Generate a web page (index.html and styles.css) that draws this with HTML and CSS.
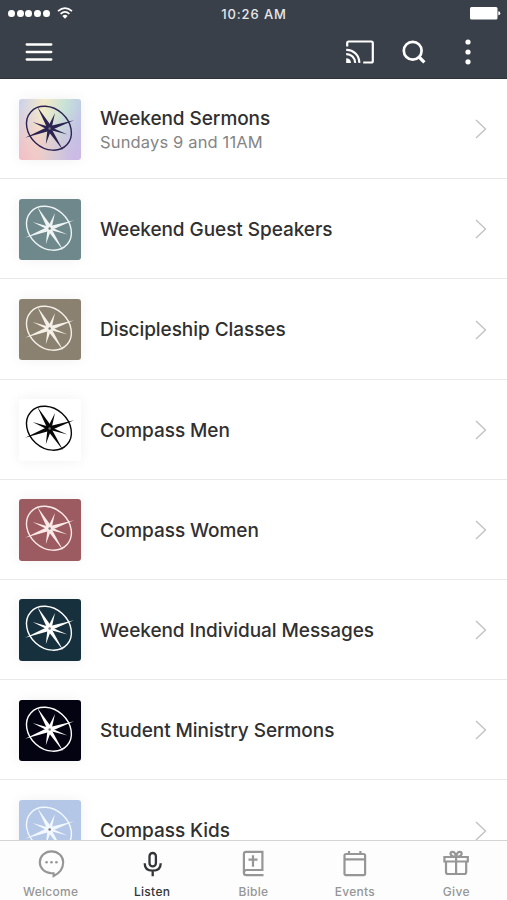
FILE: index.html
```html
<!DOCTYPE html>
<html lang="en">
<head>
<meta charset="utf-8">
<title>Listen</title>
<link rel="stylesheet" href="styles.css">
</head>
<body>
<svg class="defs" aria-hidden="true">
  <symbol id="compass" viewBox="0 0 61 61">
    <ellipse cx="29.7" cy="29" rx="24.2" ry="19.6" transform="rotate(42 29.7 29)" fill="none" stroke="currentColor" stroke-width="1.4"/>
    <path fill="currentColor" d="M18 7.5 31.8 26.6 54.5 21 32.8 30.6 43.9 51 29 32 6 38.5 27.6 28Z"/>
    <path fill="currentColor" d="M35.7 13.8 32.5 28.3 48 35.2 31.8 31 26.6 44.8 28.2 30.2 13.5 22.8 29 27.4Z"/>
    <circle class="hub" cx="30.4" cy="29.2" r="1.2"/>
  </symbol>
  <symbol id="chevron" viewBox="0 0 12 20"><path d="M1 1 10.5 10 1 19" fill="none" stroke="currentColor" stroke-width="1.4"/></symbol>
</svg>
<div class="app">
  <header class="header">
    <div class="status">
      <div class="signal"><i></i><i></i><i></i><i></i><i></i>
        <svg class="wifi" width="16" height="12" viewBox="0 0 16 12"><g fill="none" stroke="currentColor" stroke-width="1.7"><path d="M1 4.2Q8-1.8 15 4.2"/><path d="M3.6 6.9Q8 3 12.4 6.9"/></g><path fill="currentColor" d="M5.4 8.9Q8 6.8 10.6 8.9L8 11.7Z"/></svg>
      </div>
      <time class="clock">10:26 AM</time>
      <svg class="battery" width="31" height="13" viewBox="0 0 31 13" fill="currentColor"><rect width="27.5" height="12.4" rx="1.5"/><path d="M28.3 4.2q2 .2 2 2t-2 2z"/></svg>
    </div>
    <div class="toolbar">
      <svg class="menu" width="28" height="20" viewBox="0 0 28 20"><path d="M1.7 2.5H26.3M1.7 10H26.3M1.7 17.5H26.3" stroke="currentColor" stroke-width="2.3" stroke-linecap="round"/></svg>
      <svg class="cast" width="28" height="24" viewBox="0 0 28 24" fill="none" stroke="currentColor" stroke-width="2.2"><path d="M1.2 6.6V3Q1.2 1.5 2.7 1.5H25.3Q26.8 1.5 26.8 3V21Q26.8 22.5 25.3 22.5H17.2M.2 9.8A12.8 12.8 0 0 1 13.3 22.9M.2 14.1A8.6 8.6 0 0 1 9.1 22.9"/><path fill="currentColor" stroke="none" d="M.2 18.2A4.8 4.8 0 0 1 5 23H.2Z"/></svg>
      <svg class="search" width="24" height="24" viewBox="0 0 24 24" fill="none" stroke="currentColor"><circle cx="10.7" cy="10.7" r="8.9" stroke-width="2.7"/><path d="m17 17 5.4 5.4" stroke-width="3.2"/></svg>
      <svg class="more" width="6" height="26" viewBox="0 0 6 26" fill="currentColor"><circle cx="3" cy="3" r="2.6"/><circle cx="3" cy="13" r="2.6"/><circle cx="3" cy="22.8" r="2.6"/></svg>
    </div>
  </header>
  <main class="list">
    <a class="row"><span class="tile rainbow"><svg><use href="#compass"/></svg></span><span class="label"><b>Weekend Sermons</b><small>Sundays 9 and 11AM</small></span><svg class="chevron"><use href="#chevron"/></svg></a>
    <a class="row"><span class="tile teal"><svg><use href="#compass"/></svg></span><span class="label"><b>Weekend Guest Speakers</b></span><svg class="chevron"><use href="#chevron"/></svg></a>
    <a class="row"><span class="tile taupe"><svg><use href="#compass"/></svg></span><span class="label"><b>Discipleship Classes</b></span><svg class="chevron"><use href="#chevron"/></svg></a>
    <a class="row"><span class="tile white"><svg><use href="#compass"/></svg></span><span class="label"><b>Compass Men</b></span><svg class="chevron"><use href="#chevron"/></svg></a>
    <a class="row"><span class="tile red"><svg><use href="#compass"/></svg></span><span class="label"><b>Compass Women</b></span><svg class="chevron"><use href="#chevron"/></svg></a>
    <a class="row"><span class="tile navy"><svg><use href="#compass"/></svg></span><span class="label"><b>Weekend Individual Messages</b></span><svg class="chevron"><use href="#chevron"/></svg></a>
    <a class="row"><span class="tile black"><svg><use href="#compass"/></svg></span><span class="label"><b>Student Ministry Sermons</b></span><svg class="chevron"><use href="#chevron"/></svg></a>
    <a class="row"><span class="tile blue"><svg><use href="#compass"/></svg></span><span class="label"><b>Compass Kids</b></span><svg class="chevron"><use href="#chevron"/></svg></a>
  </main>
  <nav class="tabs">
    <a class="tab"><svg viewBox="0 0 28 28"><path d="M16.6 23.2H14.5A11.7 10.9 0 1 1 26.2 12.3Q26.2 21.5 16.6 26Z" fill="none" stroke="currentColor" stroke-width="2.1"/><g fill="currentColor"><circle cx="9.6" cy="12.2" r="1.3"/><circle cx="14.5" cy="12.2" r="1.3"/><circle cx="19.4" cy="12.2" r="1.3"/></g></svg><span>Welcome</span></a>
    <a class="tab active"><svg viewBox="0 0 28 28" fill="none" stroke="currentColor" stroke-width="2.3"><rect x="11.5" y="3" width="6.4" height="13.4" rx="3.2"/><path d="M6.7 13.2Q6.7 20.7 14.7 20.7T22.7 13.2M14.7 20.7V26.3"/></svg><span>Listen</span></a>
    <a class="tab"><svg viewBox="0 0 28 28" fill="none" stroke="currentColor" stroke-width="2.2"><path d="M24.5 25.2H7.5Q4.9 25.2 4.9 22.7V4Q4.9 1.8 7.1 1.8H23.4V20H7.5Q4.9 20 4.9 22.7M14 5.2V16.8M9.5 9.6H18.5"/></svg><span>Bible</span></a>
    <a class="tab"><svg viewBox="0 0 28 28" fill="none" stroke="currentColor" stroke-width="2.2"><rect x="3.5" y="4" width="20.6" height="21.2" rx="1.6"/><path d="M3.5 9.3H24.1M8 1V4.5M19.4 1V4.5"/></svg><span>Events</span></a>
    <a class="tab"><svg viewBox="0 0 28 28" fill="none" stroke="currentColor" stroke-width="2.2"><path d="M2.4 7H25.8V11.5H2.4ZM4 12V22Q4 24 6 24H22.2Q24.2 24 24.2 22V12M14.1 7V24M14.1 6.8C7.5 7 7.4 1.8 10.4 1.8Q13.3 1.8 14.1 6.8Q14.9 1.8 17.8 1.8C20.8 1.8 20.7 7 14.1 6.8"/></svg><span>Give</span></a>
  </nav>
</div>
</body>
</html>
```
FILE: styles.css
```css
* { box-sizing: border-box; }
body { margin: 0; background: #fff; font-family: Inter, Roboto, "Liberation Sans", sans-serif; }
.defs { display: none; }
.app { display: flex; flex-direction: column; height: 900px; overflow: hidden; }

.header { flex: none; height: 79px; background: #3a404a; color: #fff; border-bottom: 1px solid #30353d; }
.status { display: grid; grid-template-columns: 1fr auto 1fr; align-items: center; height: 27px; padding: 0 6px 0 8px; }
.signal { display: flex; align-items: center; gap: 1.6px; }
.signal i { width: 7.1px; height: 7.6px; border-radius: 50%; background: #fff; }
.wifi { margin-left: 6px; margin-top: -1px; }
.clock { margin-left: -1px; font-size: 13px; font-weight: 500; letter-spacing: 0.9px; color: #e6e8ea; }
.battery { justify-self: end; }
.toolbar { display: flex; align-items: center; height: 50px; padding: 0 36px 0 25px; }
.cast { margin-left: auto; }
.search { margin-left: 28px; }
.more { margin-left: 39px; }

.list { flex: 1; min-height: 0; overflow: hidden; }
.row { display: flex; align-items: center; height: 100.2px; padding: 1.4px 20px 0 19px; border-bottom: 1px solid #e9e9e9; }
.tile { flex: none; width: 61.5px; height: 61.5px; border-radius: 3px; box-shadow: 0 0 14px rgba(0, 0, 0, 0.06); color: #fff; }
.tile svg { display: block; width: 100%; height: 100%; }
.hub { fill: #777; }
.rainbow { background: radial-gradient(circle at 0 100%, #f3bec5, transparent 60%), radial-gradient(circle at 100% 100%, #ceb9e4, transparent 60%), linear-gradient(100deg, #cccfee, #f3eac8 35%, #c8e2d7 65%, #b9bfeb); color: #2b2452; }
.teal { background: #6e888c; color: #eef4f4; }
.taupe { background: #8b8170; color: #f5f0e7; }
.white { background: #fff; color: #080808; }
.red { background: #9c5b60; color: #fae9e7; }
.navy { background: #17303e; }
.black { background: #030311; }
.blue { background: #b4c7e6; color: #f2f8ff; }
.label { flex: 1; margin-left: 19.5px; padding-top: 1.4px; }
.label b, .label small { display: block; white-space: nowrap; }
.label b { font-size: 19px; line-height: 24px; font-weight: 500; letter-spacing: -0.06px; color: #303030; }
.label small { font-size: 16.5px; line-height: 22px; letter-spacing: 0.15px; color: #858585; }
.chevron { flex: none; width: 12px; height: 20px; color: #c2c2c2; }

.tabs { flex: none; display: grid; grid-template-columns: repeat(5, 1fr); height: 60px; border-top: 1px solid #d4d4d4; background: #fdfdfd; }
.tab { display: flex; flex-direction: column; align-items: center; padding-top: 9px; color: #969696; font-size: 12px; font-weight: 500; line-height: 16px; letter-spacing: 0.3px; }
.tab svg { width: 28px; height: 28px; margin-bottom: 6px; }
.active { color: #333539; }
```
